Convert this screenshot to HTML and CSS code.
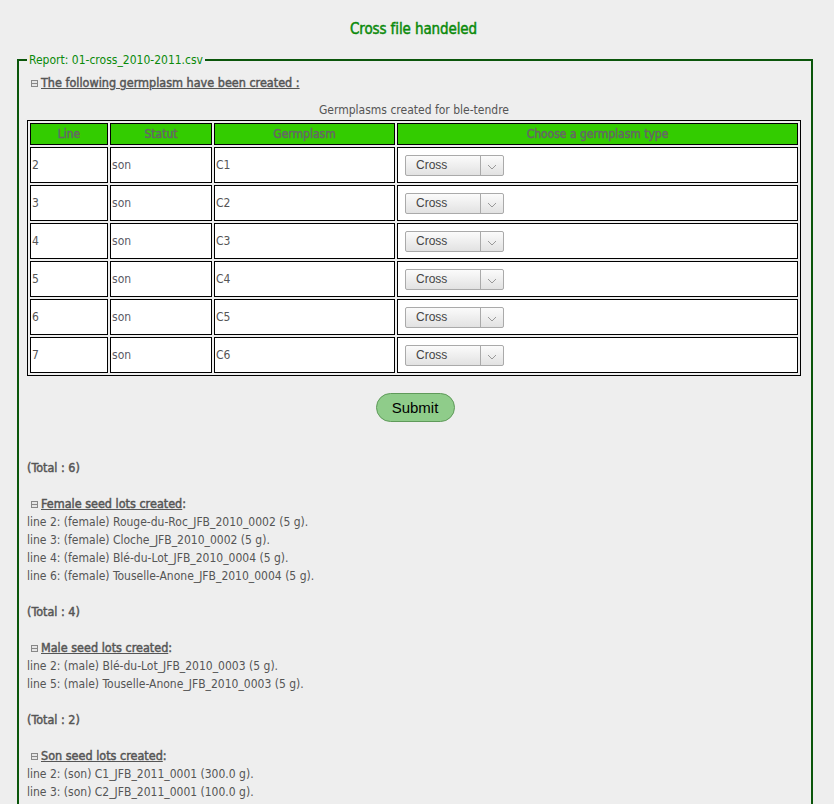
FILE: index.html
```html
<!DOCTYPE html>
<html>
<head>
<meta charset="utf-8">
<title>Cross file handeled</title>
<link rel="stylesheet" href="styles.css">
</head>
<body>
<h1 class="title">Cross file handeled</h1>
<fieldset class="report">
  <legend class="report-legend">Report: 01-cross_2010-2011.csv</legend>
  <div class="section-head"><span class="toggle"></span><span class="section-label">The following germplasm have been created :</span></div>
  <table class="grid">
    <caption>Germplasms created for ble-tendre</caption>
    <thead>
      <tr><th class="c-line">Line</th><th class="c-statut">Statut</th><th class="c-germ">Germplasm</th><th>Choose a germplasm type</th></tr>
    </thead>
    <tbody>
      <tr><td>2</td><td class="small">son</td><td>C1</td><td><span class="select"><span class="select-text">Cross</span><span class="select-arrow"><svg width="10" height="6" viewBox="0 0 10 6"><path d="M1 1 L5 5 L9 1" fill="none" stroke="#999" stroke-width="1"/></svg></span></span></td></tr>
      <tr><td>3</td><td class="small">son</td><td>C2</td><td><span class="select"><span class="select-text">Cross</span><span class="select-arrow"><svg width="10" height="6" viewBox="0 0 10 6"><path d="M1 1 L5 5 L9 1" fill="none" stroke="#999" stroke-width="1"/></svg></span></span></td></tr>
      <tr><td>4</td><td class="small">son</td><td>C3</td><td><span class="select"><span class="select-text">Cross</span><span class="select-arrow"><svg width="10" height="6" viewBox="0 0 10 6"><path d="M1 1 L5 5 L9 1" fill="none" stroke="#999" stroke-width="1"/></svg></span></span></td></tr>
      <tr><td>5</td><td class="small">son</td><td>C4</td><td><span class="select"><span class="select-text">Cross</span><span class="select-arrow"><svg width="10" height="6" viewBox="0 0 10 6"><path d="M1 1 L5 5 L9 1" fill="none" stroke="#999" stroke-width="1"/></svg></span></span></td></tr>
      <tr><td>6</td><td class="small">son</td><td>C5</td><td><span class="select"><span class="select-text">Cross</span><span class="select-arrow"><svg width="10" height="6" viewBox="0 0 10 6"><path d="M1 1 L5 5 L9 1" fill="none" stroke="#999" stroke-width="1"/></svg></span></span></td></tr>
      <tr><td>7</td><td class="small">son</td><td>C6</td><td><span class="select"><span class="select-text">Cross</span><span class="select-arrow"><svg width="10" height="6" viewBox="0 0 10 6"><path d="M1 1 L5 5 L9 1" fill="none" stroke="#999" stroke-width="1"/></svg></span></span></td></tr>
    </tbody>
  </table>
  <div class="submit-row"><button class="submit" type="button">Submit</button></div>

  <p class="total first">(Total : 6)</p>

  <div class="lots">
    <div class="lots-head"><span class="toggle"></span><span class="lots-label">Female seed lots created</span>:</div>
    <div class="line">line 2: (female) Rouge-du-Roc_JFB_2010_0002 (5 g).</div>
    <div class="line">line 3: (female) Cloche_JFB_2010_0002 (5 g).</div>
    <div class="line">line 4: (female) Blé-du-Lot_JFB_2010_0004 (5 g).</div>
    <div class="line">line 6: (female) Touselle-Anone_JFB_2010_0004 (5 g).</div>
  </div>
  <p class="total">(Total : 4)</p>

  <div class="lots">
    <div class="lots-head"><span class="toggle"></span><span class="lots-label">Male seed lots created</span>:</div>
    <div class="line">line 2: (male) Blé-du-Lot_JFB_2010_0003 (5 g).</div>
    <div class="line">line 5: (male) Touselle-Anone_JFB_2010_0003 (5 g).</div>
  </div>
  <p class="total">(Total : 2)</p>

  <div class="lots">
    <div class="lots-head"><span class="toggle"></span><span class="lots-label">Son seed lots created</span>:</div>
    <div class="line">line 2: (son) C1_JFB_2011_0001 (300.0 g).</div>
    <div class="line">line 3: (son) C2_JFB_2011_0001 (100.0 g).</div>
  </div>
</fieldset>
</body>
</html>
```

FILE: styles.css
```css
html, body {
  margin: 0;
  padding: 0;
  background: #eeeeee;
}
body {
  font-family: "DejaVu Sans Condensed", "DejaVu Sans", sans-serif;
  font-size: 12px;
  color: #555555;
  overflow: hidden;
  height: 804px;
}
.title,
.section-head,
.total,
.lots-head,
.grid th {
  font-weight: normal;
  -webkit-text-stroke: 0.45px currentColor;
}
.title {
  margin: 0;
  padding: 20px 7px 0 0;
  height: 18px;
  line-height: 18px;
  text-align: center;
  font-size: 15px;
  letter-spacing: -0.1px;
  color: #0a8a0a;
}
.report {
  margin: 15px 0 0 17px;
  width: 776px;
  border: 2px solid #0b560b;
  border-radius: 0;
  padding: 0 8px 10px 8px;
  min-inline-size: 0;
}
.report-legend {
  color: #0a8a0a;
  padding: 0 2px;
  margin-left: 0;
  font-size: 12px;
  line-height: 14px;
}
.section-head {
  margin: 8px 0 0 4px;
  line-height: 16px;
  font-size: 12.5px;
  display: flex;
  align-items: center;
}
.toggle {
  display: inline-block;
  flex: none;
  width: 5px;
  height: 5px;
  border: 1px solid #888;
  background: linear-gradient(#888, #888) center / 5px 1px no-repeat, #e6e6e6;
  margin-right: 3px;
  -webkit-text-stroke: 0;
}
.section-label, .lots-label {
  text-decoration: underline;
}
.grid {
  margin-top: 11px;
  width: 774px;
  border: 1px solid #000;
  border-spacing: 2px;
  background: #eeeeee;
}
.grid caption {
  line-height: 16px;
  padding-bottom: 2px;
  color: #555;
}
.grid th {
  background: #33cc00;
  border: 1px solid #000;
  height: 20px;
  padding: 0;
  color: #666;
  font-size: 12px;
}
.c-line { width: 76px; }
.c-statut { width: 100px; }
.c-germ { width: 179px; }
.grid td {
  background: #ffffff;
  border: 1px solid #000;
  height: 34px;
  padding: 0 0 0 1px;
  color: #555;
  font-size: 12px;
}
.grid td.small {
  color: #5a5a66;
}
.select {
  display: inline-flex;
  align-items: stretch;
  margin-left: 6px;
  width: 99px;
  height: 21px;
  box-sizing: border-box;
  border: 1px solid #aaaaaa;
  border-radius: 2px;
  background: linear-gradient(#fbfbfb, #e2e2e2);
  font-family: "Liberation Sans", Arial, sans-serif;
  font-size: 12px;
  color: #444;
  vertical-align: middle;
}
.select-text {
  flex: 0 0 75px;
  padding-left: 10px;
  box-sizing: border-box;
  line-height: 19px;
  border-right: 1px solid #aaaaaa;
}
.select-arrow {
  flex: 1;
  display: flex;
  align-items: center;
  justify-content: center;
  padding-top: 3px;
}
.submit-row {
  text-align: center;
  margin-top: 17px;
}
.submit {
  width: 79px;
  height: 29px;
  border: 1px solid #5f9a5a;
  border-radius: 15px;
  background: #8fcc8a;
  font-family: "Liberation Sans", Arial, sans-serif;
  font-size: 15px;
  color: #000;
  padding: 0;
}
.total {
  margin: 18px 0 0 0;
  line-height: 18px;
  font-size: 12.5px;
}
.total.first {
  margin-top: 37px;
}
.lots {
  margin-top: 18px;
}
.lots-head {
  line-height: 18px;
  font-size: 12.5px;
  padding-left: 4px;
  display: flex;
  align-items: center;
}
.line {
  line-height: 18px;
}
```
